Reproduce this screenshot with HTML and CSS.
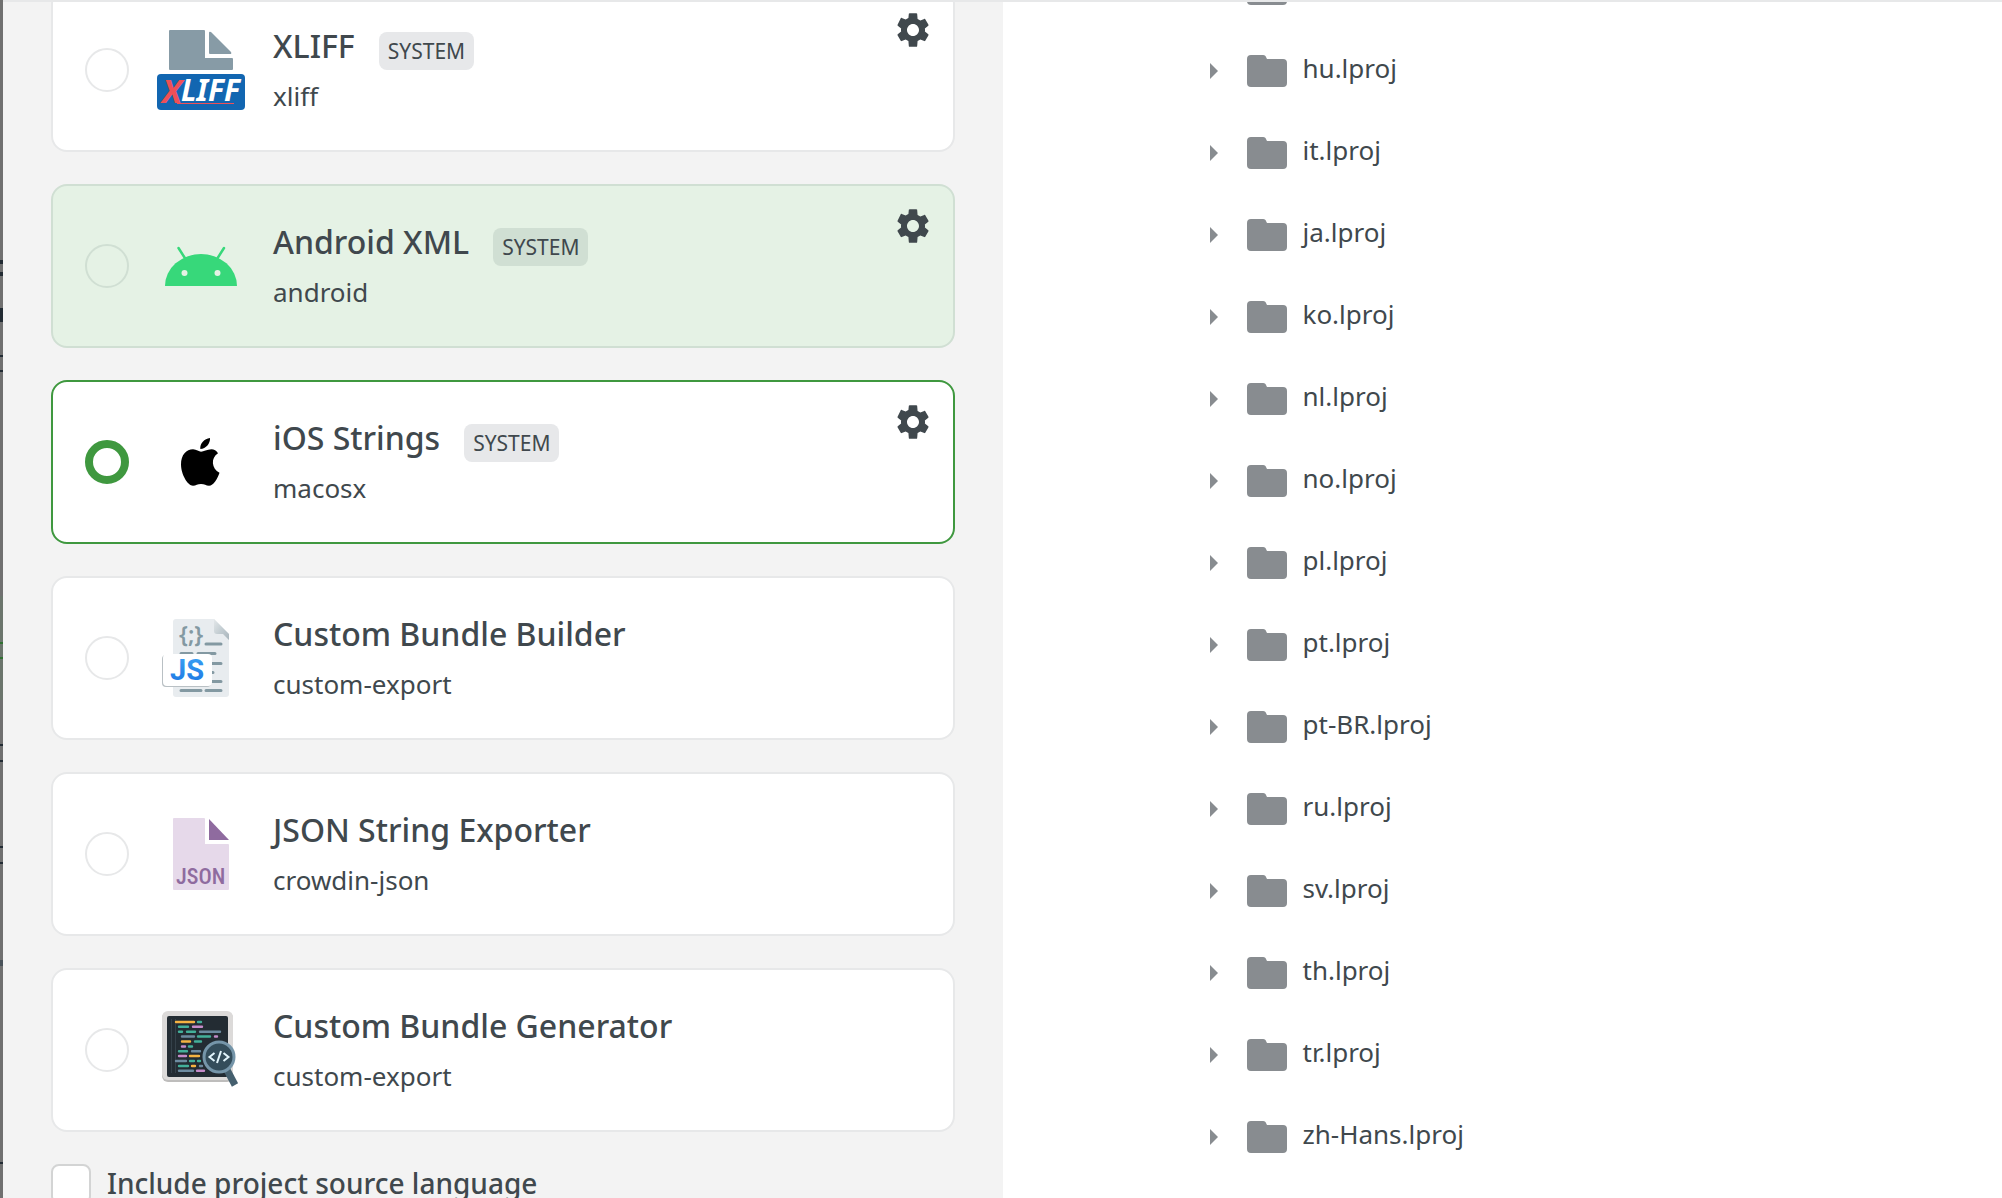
FILE: index.html
```html
<!DOCTYPE html>
<html lang="en">
<head>
<meta charset="utf-8">
<title>Bundle export format</title>
<link rel="stylesheet" href="styles.css">
</head>
<body>
<svg class="defs" aria-hidden="true">
  <symbol id="gear" viewBox="0 0 24 24"><path d="M19.14 12.94c.04-.3.06-.61.06-.94 0-.32-.02-.64-.07-.94l2.03-1.58c.18-.14.23-.41.12-.61l-1.92-3.32c-.12-.22-.37-.29-.59-.22l-2.39.96c-.5-.38-1.03-.7-1.62-.94L14.500 2.300q-.1-.4-.5-.4h-4q-.4 0-.5.4l-.26 2.450c-.59.24-1.130.57-1.620.94l-2.39-.96c-.22-.08-.47 0-.59.22L2.74 8.87c-.12.21-.08.47.12.61l2.03 1.58c-.05.3-.09.63-.09.94s.02.64.07.94l-2.03 1.58c-.18.14-.23.41-.12.61l1.92 3.32c.12.22.37.29.59.22l2.39-.96c.5.38 1.030.7 1.620.94l.26 3.050q.1.4.5.4h4q.4 0 .5-.4l.26-3.050c.59-.24 1.130-.56 1.620-.94l2.39.96c.22.08.47 0 .59-.22l1.92-3.32c.12-.22.07-.47-.12-.61l-2.01-1.58zM12 15.600c-1.98 0-3.6-1.62-3.6-3.6s1.62-3.6 3.6-3.6 3.6 1.62 3.6 3.6-1.62 3.6-3.6 3.6z"/></symbol>
  <symbol id="folder" viewBox="0 0 40 32"><path d="M4 0h12q1.500 0 2.500 1L20 4h16q4 0 4 4v20q0 4-4 4H4q-4 0-4-4V4q0-4 4-4z"/></symbol>
  <symbol id="arrow" viewBox="0 0 8 16"><path d="M0 0l8 8-8 8z"/></symbol>
</svg>
<div class="dialog">
  <form class="formats">
    <div class="cards">
      <div class="card">
        <input class="radio" type="radio" name="format" id="f-xliff">
        <svg class="logo" viewBox="0 0 88 88" aria-hidden="true">
          <path fill="#879ba6" d="M13 4h34q1 0 1 1v27h27q1 0 1 1v10q0 1-1 1H13q-1 0-1-1V5q0-1 1-1zM52 7q0-2 2-1l20 20q1 2-1 2H53q-1 0-1-1z"/>
          <rect y="48" width="88" height="36" rx="4" fill="#1266b1"/>
          <path stroke="#ee5057" d="M20 77.500h57"/>
          <text x="5" y="77" font-size="33" font-weight="700" font-style="italic" fill="#ee5057">X</text>
          <text x="24" y="75" font-size="30" font-weight="700" font-style="italic" fill="#fff">LIFF</text>
        </svg>
        <label class="info" for="f-xliff"><span class="title">XLIFF <span class="badge">SYSTEM</span></span><span class="type">xliff</span></label>
        <button class="settings" type="button" aria-label="Settings"><svg><use href="#gear"/></svg></button>
      </div>
      <div class="card hovered">
        <input class="radio" type="radio" name="format" id="f-android">
        <svg class="logo" viewBox="0 0 88 88" aria-hidden="true">
          <path fill="#37d87a" d="M8 64a36 32 0 0 1 72 0z"/>
          <path stroke="#37d87a" stroke-width="2.500" stroke-linecap="round" d="M21.500 26l7 11M67 26l-7 11"/>
          <circle cx="27.500" cy="51" r="3" fill="#e5f2e5"/><circle cx="60.500" cy="51" r="3" fill="#e5f2e5"/>
        </svg>
        <label class="info" for="f-android"><span class="title">Android XML <span class="badge">SYSTEM</span></span><span class="type">android</span></label>
        <button class="settings" type="button" aria-label="Settings"><svg><use href="#gear"/></svg></button>
      </div>
      <div class="card selected">
        <input class="radio" type="radio" name="format" id="f-ios" checked>
        <svg class="logo" viewBox="0 0 88 88" aria-hidden="true">
          <path d="M44 33.700c2.500 0 6-2.500 10.500-2.500 2.500 0 5 1.500 6.500 4-7.500 4.500-6.500 15.500 1.500 19.500-2 6-6 13-10.500 13-3 0-4.500-1.700-8-1.700s-5 1.700-8 1.700c-5 0-12-11-12-21.500 0-9.500 5.500-15 12-15 3.500 0 6 2.500 8 2.500zM43.300 31c-.5-5.500 4-10.500 9.700-11 .5 5-4 11-9.700 11z"/>
        </svg>
        <label class="info" for="f-ios"><span class="title">iOS Strings <span class="badge">SYSTEM</span></span><span class="type">macosx</span></label>
        <button class="settings" type="button" aria-label="Settings"><svg><use href="#gear"/></svg></button>
      </div>
      <div class="card">
        <input class="radio" type="radio" name="format" id="f-builder">
        <svg class="logo" viewBox="0 0 88 88" aria-hidden="true">
          <defs>
            <linearGradient id="fold" x1="0" y1="0" x2="1" y2="1"><stop offset="0" stop-color="#e4e8ea"/><stop offset=".5" stop-color="#c3cdd2"/><stop offset="1" stop-color="#a9b5bc"/></linearGradient>
            <linearGradient id="blue" x1="0" y1="0" x2="0" y2="1"><stop offset="0" stop-color="#3da4f6"/><stop offset="1" stop-color="#1a73e0"/></linearGradient>
          </defs>
          <path fill="#e8ecef" d="M19 5h38l15 15v60q0 3-3 3H19q-3 0-3-3V8q0-3 3-3z"/>
          <path fill="url(#fold)" d="M57 5l15 15v6l-6-6h-6q-3 0-3-3z"/>
          <text x="22" y="29" font-size="23" font-weight="600" fill="#8399a2">{;}</text>
          <path stroke="#8399a2" stroke-width="3" stroke-linecap="round" d="M49 30h15M24 39.500h11M41 39.500h17M50 49.500h14M54 58.500h2M50 67.500h14M24 76.500h20M49 76.500h15"/>
          <rect x="5" y="41" width="49" height="32" rx="4" fill="#b9c0c4"/>
          <rect x="6" y="40" width="49" height="32" rx="4" fill="#fff"/>
          <text class="sans" x="13" y="66" font-size="29" font-weight="700" fill="url(#blue)">JS</text>
        </svg>
        <label class="info" for="f-builder"><span class="title">Custom Bundle Builder</span><span class="type">custom-export</span></label>
      </div>
      <div class="card">
        <input class="radio" type="radio" name="format" id="f-json">
        <svg class="logo" viewBox="0 0 88 88" aria-hidden="true">
          <path fill="#e6d9ea" d="M17 8h30q1 0 1 1v25h23q1 0 1 1v44q0 1-1 1H17q-1 0-1-1V9q0-1 1-1z"/>
          <path fill="#8f6b9f" d="M52 9l20 21H52z"/>
          <text class="condensed" x="19" y="74" font-size="22" font-weight="500" fill="#8f6b9f">JSON</text>
        </svg>
        <label class="info" for="f-json"><span class="title">JSON String Exporter</span><span class="type">crowdin-json</span></label>
      </div>
      <div class="card">
        <input class="radio" type="radio" name="format" id="f-generator">
        <svg class="logo" viewBox="0 0 88 88" aria-hidden="true">
          <rect x="5" y="6" width="71" height="70" rx="6" fill="#bebdbc"/>
          <rect x="5" y="5" width="71" height="69" rx="6" fill="#dcdad9"/>
          <rect x="10" y="10" width="61" height="61" rx="2" fill="#232c33"/>
          <path stroke="#35414a" d="M14.500 13v54M18.500 13v54"/>
          <g fill="none" stroke-width="2.400" stroke-linecap="round">
            <path stroke="#f5b342" d="M19 16h18M25 35.500h8M33 50h9M35 60h3"/>
            <path stroke="#43b09a" d="M41 16h3M22 20.700h9M22 25.700h3M30 25.700h8M41 30.500h12M38 35.500h6M32 40.500h3M22 45.300h8M33 55h4M41 55h2M22 60h9"/>
            <path stroke="#c58bc9" d="M36 20.700h9M58 30.500h2M25 40.500h3M22 50h7M40 64.800h7"/>
            <path stroke="#6d8ba0" d="M43 25.700h20M25 30.500h12M35 45.300h8M19 55h10M43 60h2M22 64.800h14"/>
          </g>
          <path stroke="#455f6e" stroke-width="7" d="M69 62l9 17"/>
          <circle cx="62" cy="51" r="15" fill="#344d5b" stroke="#7595a9" stroke-width="3"/>
          <path fill="none" stroke="#e2f5fc" stroke-width="2" d="M57.500 47l-5 4 5 4M66.500 47l5 4-5 4M64 45l-4 12"/>
        </svg>
        <label class="info" for="f-generator"><span class="title">Custom Bundle Generator</span><span class="type">custom-export</span></label>
      </div>
    </div>
    <label class="option"><input class="checkbox" type="checkbox"><span>Include project source language</span></label>
  </form>
  <div class="preview">
    <ul class="tree">
      <li><svg class="arrow"><use href="#arrow"/></svg><svg class="folder"><use href="#folder"/></svg><span>fi.lproj</span></li>
      <li><svg class="arrow"><use href="#arrow"/></svg><svg class="folder"><use href="#folder"/></svg><span>hu.lproj</span></li>
      <li><svg class="arrow"><use href="#arrow"/></svg><svg class="folder"><use href="#folder"/></svg><span>it.lproj</span></li>
      <li><svg class="arrow"><use href="#arrow"/></svg><svg class="folder"><use href="#folder"/></svg><span>ja.lproj</span></li>
      <li><svg class="arrow"><use href="#arrow"/></svg><svg class="folder"><use href="#folder"/></svg><span>ko.lproj</span></li>
      <li><svg class="arrow"><use href="#arrow"/></svg><svg class="folder"><use href="#folder"/></svg><span>nl.lproj</span></li>
      <li><svg class="arrow"><use href="#arrow"/></svg><svg class="folder"><use href="#folder"/></svg><span>no.lproj</span></li>
      <li><svg class="arrow"><use href="#arrow"/></svg><svg class="folder"><use href="#folder"/></svg><span>pl.lproj</span></li>
      <li><svg class="arrow"><use href="#arrow"/></svg><svg class="folder"><use href="#folder"/></svg><span>pt.lproj</span></li>
      <li><svg class="arrow"><use href="#arrow"/></svg><svg class="folder"><use href="#folder"/></svg><span>pt-BR.lproj</span></li>
      <li><svg class="arrow"><use href="#arrow"/></svg><svg class="folder"><use href="#folder"/></svg><span>ru.lproj</span></li>
      <li><svg class="arrow"><use href="#arrow"/></svg><svg class="folder"><use href="#folder"/></svg><span>sv.lproj</span></li>
      <li><svg class="arrow"><use href="#arrow"/></svg><svg class="folder"><use href="#folder"/></svg><span>th.lproj</span></li>
      <li><svg class="arrow"><use href="#arrow"/></svg><svg class="folder"><use href="#folder"/></svg><span>tr.lproj</span></li>
      <li><svg class="arrow"><use href="#arrow"/></svg><svg class="folder"><use href="#folder"/></svg><span>zh-Hans.lproj</span></li>
    </ul>
  </div>
</div>
</body>
</html>
```
FILE: styles.css
```css
* { box-sizing: border-box; }

/* A sliver of the dimmed page shows beside the dialog. */
body {
  margin: 0;
  background: linear-gradient(
    #707070 260px, #222b33 260px 264px, #707070 264px 272px, #222b33 272px 276px,
    #707070 276px 308px, #222b33 308px 322px, #707070 322px 355px, #222b33 355px 357px,
    #707070 357px 370px, #222b33 370px 372px, #707070 372px 596px, #6b756c 596px 642px,
    #2f7030 642px 644px, #6b756c 644px 657px, #2f7030 657px 659px, #6b756c 659px 700px,
    #707070 700px 744px, #222b33 744px 746px, #707070 746px 760px, #222b33 760px 762px,
    #707070 762px 846px, #222b33 846px 848px, #707070 848px 862px, #222b33 862px 864px,
    #707070 864px 960px, #4a535a 960px 966px, #707070 966px 1162px, #222b33 1162px 1164px,
    #707070 1164px) no-repeat;
  color: #40484d;
  font-family: "Noto Sans", sans-serif;
  font-size: 26px;
}

.defs { display: none; }

.dialog {
  display: flex;
  height: 100vh;
  margin-left: 3px;
  overflow: hidden;
  background: #fff;
  border-top: 2px solid #e7e8e9;
}

.formats {
  flex: 0 0 50%;
  padding: 0 48px;
  overflow: hidden;
  background: #f3f3f3;
}

/* The list is scrolled slightly past its first card. */
.cards {
  display: flex;
  flex-direction: column;
  gap: 32px;
  margin-top: -14px;
}

.card {
  display: flex;
  align-items: center;
  gap: 28px;
  height: 164px;
  padding: 20px 20px 20px 32px;
  background: #fff;
  border: 2px solid #e7e8e9;
  border-radius: 16px;
}

.card.hovered { background: #e5f2e5; border-color: #d0dfd3; }
.card.selected { border-color: #3f983f; }

.radio {
  appearance: none;
  flex: none;
  width: 44px;
  height: 44px;
  margin: 0;
  border: 2px solid #e7e8e9;
  border-radius: 50%;
}

.hovered .radio { border-color: #d0dfd3; }
.radio:checked { border: 8px solid #3f983f; }

.logo { flex: none; width: 88px; height: 88px; }
.logo .sans { font-family: Roboto, sans-serif; }
.logo .condensed { font-family: "Roboto Condensed", Roboto, sans-serif; }

.info { display: flex; flex: 1; flex-direction: column; }

.title {
  display: flex;
  align-items: center;
  gap: 24px;
  font-size: 32px;
  font-weight: 500;
  line-height: 52px;
}

.type { line-height: 48px; }

.badge {
  height: 38px;
  margin-top: 10px;
  padding: 0 9px;
  background: #e7e8ea;
  border-radius: 8px;
  font-size: 21px;
  font-weight: 400;
  line-height: 38px;
}

.hovered .badge { background: #d0dfd3; }

.settings {
  align-self: flex-start;
  width: 40px;
  height: 40px;
  padding: 0;
  background: none;
  border: 0;
}

.settings svg { display: block; width: 40px; height: 40px; fill: #40484d; }

.option {
  display: flex;
  align-items: center;
  gap: 16px;
  margin-top: 32px;
  font-size: 28px;
  font-weight: 500;
  line-height: 38px;
}

.option span { padding-bottom: 2px; }

.checkbox {
  appearance: none;
  flex: none;
  width: 40px;
  height: 40px;
  margin: 0;
  background: #fff;
  border: 2px solid #d3d4d4;
  border-radius: 8px;
}

.preview { flex: 1; overflow: hidden; }

.tree {
  margin: -54px 0 0;
  padding: 0 0 0 207px;
  list-style: none;
}

.tree li { display: flex; align-items: center; height: 82px; }
.tree svg { fill: #888c90; }
.arrow { width: 8px; height: 16px; margin-right: 29px; }
.folder { width: 40px; height: 32px; margin-right: 16px; }
.tree span { padding-bottom: 6px; }
```
